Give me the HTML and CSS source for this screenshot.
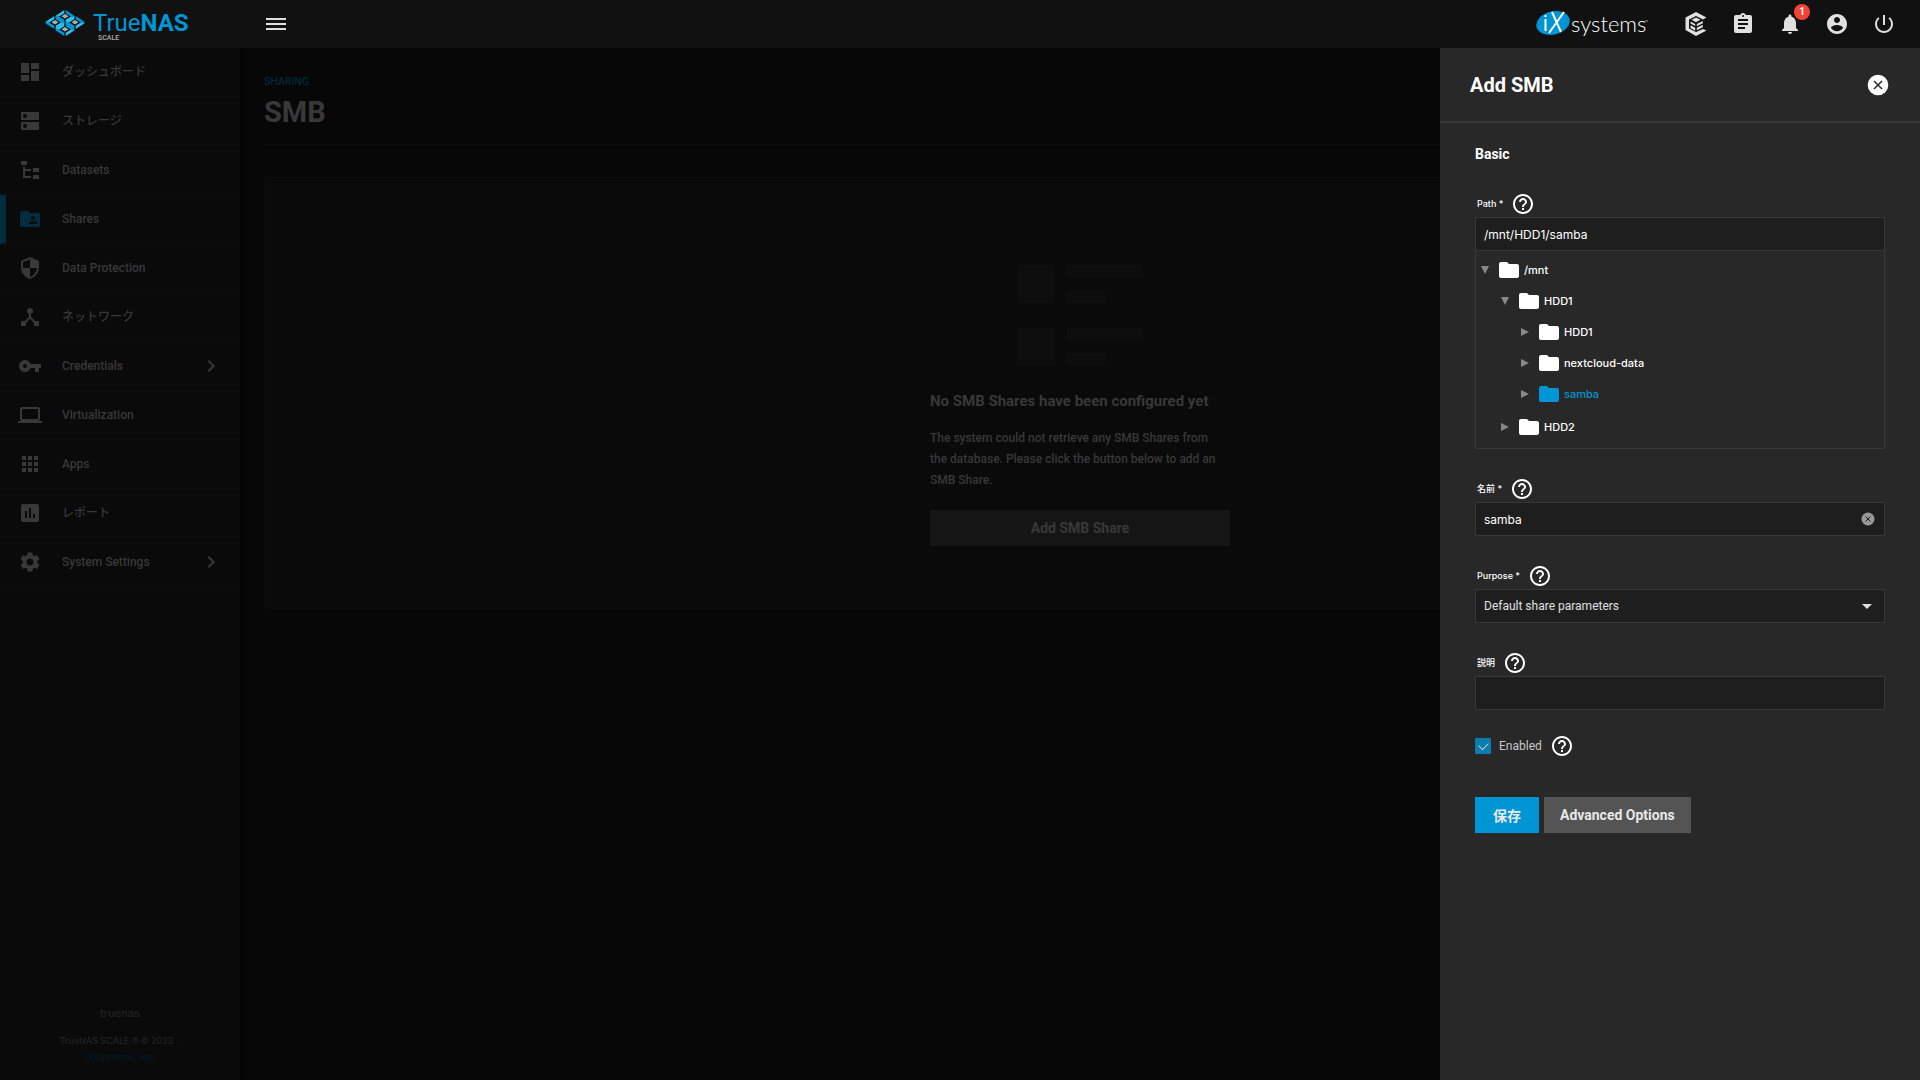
FILE: index.html
```html
<!DOCTYPE html>
<html lang="ja">
<head>
<meta charset="utf-8">
<title>TrueNAS - SMB</title>
<link rel="stylesheet" href="styles.css">
</head>
<body>
<svg class="defs" aria-hidden="true">
  <symbol id="help" viewBox="0 0 24 24"><path d="M11 18h2v-2h-2v2zm1-16C6.480 2 2 6.480 2 12s4.480 10 10 10 10-4.480 10-10S17.520 2 12 2zm0 18c-4.410 0-8-3.590-8-8s3.590-8 8-8 8 3.590 8 8-3.590 8-8 8zm0-14c-2.210 0-4 1.790-4 4h2c0-1.100.900-2 2-2s2 .900 2 2c0 2-3 1.750-3 5h2c0-2.250 3-2.500 3-5 0-2.210-1.790-4-4-4z"/></symbol>
  <symbol id="folder" viewBox="0 0 24 24"><path d="M10 4H4c-1.100 0-1.990.900-1.990 2L2 18c0 1.100.900 2 2 2h16c1.100 0 2-.900 2-2V8c0-1.100-.900-2-2-2h-8l-2-2z"/></symbol>
  <symbol id="chevron" viewBox="0 0 24 24"><path d="M10 6L8.590 7.410 13.170 12l-4.580 4.590L10 18l6-6z"/></symbol>
  <symbol id="down" viewBox="0 0 8 8"><path d="M0 0h8L4 8z"/></symbol>
  <symbol id="right" viewBox="0 0 8 8"><path d="M0 0l8 4-8 4z"/></symbol>
  <g id="cell">
    <path class="light" d="M-9.700 0L-.700-6v3.200L-5 0l-2.400 1.500-2.300-1.200zM9.700 1.200L.700 7V3.800L5 1l2.400-1.500z"/>
    <path class="blue" d="M9.700 0L.700-6v3.200L5 0l2.400 1.500 2.300-1.200zM-9.700 1.200L-.700 7V3.800L-5 1l-2.400-1.500z"/>
    <path class="grey" d="M0-2l3.500 2.300L0 2.600-3.500.300z"/>
  </g>
</svg>

<header class="topbar">
  <a class="brand" href="#" aria-label="TrueNAS SCALE">
    <svg width="152" height="40" viewBox="0 0 152 40">
      <use href="#cell" x="20" y="12"/>
      <use href="#cell" x="10" y="18"/>
      <use href="#cell" x="30" y="18"/>
      <use href="#cell" x="20" y="25"/>
      <text class="logo-text" x="48" y="27"><tspan>True</tspan><tspan class="logo-bold">NAS</tspan></text>
      <text class="logo-sub" x="53" y="36">SCALE</text>
    </svg>
  </a>
  <button class="icon-btn menu-btn" aria-label="Menu"><svg width="24" height="24" viewBox="0 0 24 24"><path d="M2 6h20v2H2zM2 11h20v2H2zM2 16h20v2H2z"/></svg></button>
  <div class="actions">
    <a class="ix" href="#" aria-label="iXsystems">
      <svg width="116" height="36" viewBox="0 0 116 36">
        <ellipse class="blue" cx="17" cy="17" rx="17" ry="11.500" transform="rotate(-14 17 17)"/>
        <path class="ix-mark" d="M9.500 13v12M9.500 9v2M16 6l9 20M28 6L13 27"/>
        <text class="ix-text" x="35" y="26">systems</text>
        <path class="ix-tm" d="M109 15h3"/>
      </svg>
    </a>
    <button class="icon-btn" aria-label="TrueCommand"><svg width="24" height="24" viewBox="0 0 24 24"><path d="M12 0l10.500 5.500-3.500 2L12 4 5 7.500v9l7 3.500 7-3 3.500 1.500L12 24 1.500 18V5.500z"/><path d="M12 5.500l4.500 2.300-4.500 2.400-4.500-2.400zM6.500 9.500l4.700 2.500v2L6.500 11.500zM6.500 13.300l4.700 2.500v3L6.500 16zM12.800 12l6-3v2.300l-6 3zM12.800 15.800l6-3v2.400l-6 3z"/></svg></button>
    <button class="icon-btn" aria-label="Jobs"><svg width="24" height="24" viewBox="0 0 24 24"><path d="M17 9H7V7h10m0 6H7v-2h10m-3 6H7v-2h7M12 3a1 1 0 0 1 1 1 1 1 0 0 1-1 1 1 1 0 0 1-1-1 1 1 0 0 1 1-1m7 0h-4.180C14.400 1.840 13.300 1 12 1s-2.400.840-2.820 2H5a2 2 0 0 0-2 2v14a2 2 0 0 0 2 2h14a2 2 0 0 0 2-2V5a2 2 0 0 0-2-2z"/></svg></button>
    <button class="icon-btn" aria-label="Alerts"><svg width="24" height="24" viewBox="0 0 24 24"><path d="M12 22c1.100 0 2-.900 2-2h-4c0 1.100.890 2 2 2zm6-6v-5c0-3.070-1.640-5.640-4.500-6.320V4c0-.830-.670-1.500-1.500-1.500s-1.500.670-1.500 1.500v.680C7.630 5.360 6 7.920 6 11v5l-2 2v1h16v-1l-2-2z"/></svg><span class="badge">1</span></button>
    <button class="icon-btn" aria-label="Account"><svg width="24" height="24" viewBox="0 0 24 24"><path d="M12 2C6.480 2 2 6.480 2 12s4.480 10 10 10 10-4.480 10-10S17.520 2 12 2zm0 3c1.660 0 3 1.340 3 3s-1.340 3-3 3-3-1.340-3-3 1.340-3 3-3zm0 14.200c-2.500 0-4.710-1.280-6-3.220.030-1.990 4-3.080 6-3.080 1.990 0 5.970 1.090 6 3.080-1.290 1.940-3.500 3.220-6 3.220z"/></svg></button>
    <button class="icon-btn" aria-label="Power"><svg width="24" height="24" viewBox="0 0 24 24"><path d="M13 3h-2v10h2V3zm4.830 2.170l-1.420 1.420C17.990 7.860 19 9.810 19 12c0 3.870-3.130 7-7 7s-7-3.130-7-7c0-2.190 1.010-4.140 2.580-5.420L6.170 5.170C4.230 6.820 3 9.260 3 12c0 4.970 4.030 9 9 9s9-4.030 9-9c0-2.740-1.230-5.180-3.170-6.830z"/></svg></button>
  </div>
</header>

<div class="shell">
  <aside class="sidebar">
    <nav>
      <a class="nav-item" href="#"><svg width="24" height="24" viewBox="0 0 24 24"><path d="M13 3v6h8V3m-8 18h8V11h-8M3 21h8v-6H3m0-2h8V3H3v10z"/></svg><span>ダッシュボード</span></a>
      <a class="nav-item" href="#"><svg width="24" height="24" viewBox="0 0 24 24"><path fill-rule="evenodd" d="M3 3h18v8H3zM7 5a2 2 0 1 0 0 4 2 2 0 0 0 0-4zM3 13h18v8H3zM7 15a2 2 0 1 0 0 4 2 2 0 0 0 0-4z"/></svg><span>ストレージ</span></a>
      <a class="nav-item" href="#"><svg width="24" height="24" viewBox="0 0 24 24"><path d="M3 3h6v4H3V3m12 7h6v4h-6v-4m0 7h6v4h-6v-4m-2-4H7v5h6v2H5V9h2v2h6v2z"/></svg><span>Datasets</span></a>
      <a class="nav-item active" href="#"><svg width="24" height="24" viewBox="0 0 24 24"><path d="M20 6h-8l-2-2H4c-1.100 0-1.990.900-1.990 2L2 18c0 1.100.900 2 2 2h16c1.100 0 2-.900 2-2V8c0-1.100-.900-2-2-2zm-5 3c1.100 0 2 .900 2 2s-.900 2-2 2-2-.900-2-2 .900-2 2-2zm4 8h-8v-1c0-1.330 2.670-2 4-2s4 .670 4 2v1z"/></svg><span>Shares</span></a>
      <a class="nav-item" href="#"><svg width="24" height="24" viewBox="0 0 24 24"><path d="M12 1L3 5v6c0 5.550 3.840 10.740 9 12 5.160-1.260 9-6.450 9-12V5l-9-4zm0 10.990h7c-.530 4.120-3.280 7.790-7 8.940V12H5V6.300l7-3.110v8.800z"/></svg><span>Data Protection</span></a>
      <a class="nav-item" href="#"><svg width="24" height="24" viewBox="0 0 24 24"><path d="M17 16l-4-4V8.820C14.160 8.400 15 7.300 15 6c0-1.660-1.340-3-3-3S9 4.340 9 6c0 1.300.840 2.400 2 2.820V12l-4 4H3v5h5v-3.050l4-4.200 4 4.200V21h5v-5h-4z"/></svg><span>ネットワーク</span></a>
      <a class="nav-item" href="#"><svg width="24" height="24" viewBox="0 0 24 24"><path d="M12.650 10C11.830 7.670 9.610 6 7 6c-3.310 0-6 2.690-6 6s2.690 6 6 6c2.610 0 4.830-1.670 5.650-4H17v4h4v-4h2v-4H12.650zM7 14c-1.100 0-2-.900-2-2s.900-2 2-2 2 .900 2 2-.900 2-2 2z"/></svg><span>Credentials</span><svg class="more" width="24" height="24"><use href="#chevron"/></svg></a>
      <a class="nav-item" href="#"><svg width="24" height="24" viewBox="0 0 24 24"><path d="M20 18c1.100 0 1.990-.900 1.990-2L22 6c0-1.100-.900-2-2-2H4c-1.100 0-2 .900-2 2v10c0 1.100.900 2 2 2H0v2h24v-2h-4zM4 6h16v10H4V6z"/></svg><span>Virtualization</span></a>
      <a class="nav-item" href="#"><svg width="24" height="24" viewBox="0 0 24 24"><path d="M4 8h4V4H4v4zm6 12h4v-4h-4v4zm-6 0h4v-4H4v4zm0-6h4v-4H4v4zm6 0h4v-4h-4v4zm6-10v4h4V4h-4zm-6 4h4V4h-4v4zm6 6h4v-4h-4v4zm0 6h4v-4h-4v4z"/></svg><span>Apps</span></a>
      <a class="nav-item" href="#"><svg width="24" height="24" viewBox="0 0 24 24"><path d="M19 3H5c-1.100 0-2 .900-2 2v14c0 1.100.900 2 2 2h14c1.100 0 2-.900 2-2V5c0-1.100-.900-2-2-2zM9 17H7v-7h2v7zm4 0h-2V7h2v10zm4 0h-2v-4h2v4z"/></svg><span>レポート</span></a>
      <a class="nav-item" href="#"><svg width="24" height="24" viewBox="0 0 24 24"><path d="M19.140 12.940c.040-.300.060-.610.060-.940 0-.320-.020-.640-.070-.940l2.030-1.580c.180-.140.230-.410.120-.610l-1.920-3.320c-.120-.220-.370-.290-.590-.220l-2.390.960c-.500-.380-1.030-.700-1.620-.940l-.360-2.540c-.040-.240-.240-.410-.480-.410h-3.840c-.240 0-.430.170-.470.410l-.360 2.540c-.590.240-1.130.570-1.620.940l-2.390-.960c-.220-.080-.470 0-.590.220L2.740 8.870c-.120.210-.080.470.120.610l2.030 1.580c-.050.300-.090.630-.090.940s.020.640.070.940l-2.030 1.580c-.180.140-.230.410-.120.610l1.920 3.320c.120.220.370.290.590.220l2.390-.960c.500.380 1.030.700 1.620.940l.360 2.540c.050.240.240.410.480.410h3.840c.240 0 .440-.170.470-.410l.360-2.540c.590-.240 1.130-.560 1.620-.940l2.390.960c.220.080.470 0 .590-.220l1.920-3.320c.120-.220.070-.470-.120-.610l-2.010-1.580zM12 15.600c-1.980 0-3.600-1.620-3.600-3.600s1.620-3.600 3.600-3.600 3.600 1.620 3.600 3.600-1.620 3.600-3.600 3.600z"/></svg><span>System Settings</span><svg class="more" width="24" height="24"><use href="#chevron"/></svg></a>
    </nav>
    <footer class="side-foot">
      <p class="host">truenas</p>
      <p class="copy">TrueNAS SCALE ® © 2023 <a href="#">-<br>iXsystems, Inc</a></p>
    </footer>
  </aside>

  <main class="content">
    <a class="crumb" href="#">SHARING</a>
    <h1>SMB</h1>
    <section class="card">
      <div class="empty">
        <div class="skeleton">
          <i class="block"></i><div class="lines"><i class="long"></i><i class="short"></i></div>
          <i class="block"></i><div class="lines"><i class="long"></i><i class="short"></i></div>
        </div>
        <h2>No SMB Shares have been configured yet</h2>
        <p>The system could not retrieve any SMB Shares from the database. Please click the button below to add an SMB Share.</p>
        <button class="add-btn">Add SMB Share</button>
      </div>
    </section>
  </main>
</div>

<section class="drawer" aria-labelledby="drawer-title">
  <div class="drawer-head">
    <h2 id="drawer-title">Add SMB</h2>
    <button class="close" aria-label="Close"><svg width="24" height="24" viewBox="0 0 24 24"><circle cx="12" cy="12" r="10.300"/><path class="cross" d="M8 8l8 8M16 8l-8 8"/></svg></button>
  </div>
  <form class="form">
    <h3>Basic</h3>
    <div class="field">
      <div class="label-row"><label for="path">Path *</label><svg class="help"><use href="#help"/></svg></div>
      <input class="control" id="path" type="text" value="/mnt/HDD1/samba">
      <ul class="tree">
        <li><div class="node"><svg class="tri"><use href="#down"/></svg><svg class="folder"><use href="#folder"/></svg><span>/mnt</span></div>
          <ul>
            <li><div class="node"><svg class="tri"><use href="#down"/></svg><svg class="folder"><use href="#folder"/></svg><span>HDD1</span></div>
              <ul class="leafs">
                <li><div class="node"><svg class="tri"><use href="#right"/></svg><svg class="folder"><use href="#folder"/></svg><span>HDD1</span></div></li>
                <li><div class="node"><svg class="tri"><use href="#right"/></svg><svg class="folder"><use href="#folder"/></svg><span>nextcloud-data</span></div></li>
                <li><div class="node selected"><svg class="tri"><use href="#right"/></svg><svg class="folder"><use href="#folder"/></svg><span>samba</span></div></li>
              </ul>
            </li>
            <li><div class="node"><svg class="tri"><use href="#right"/></svg><svg class="folder"><use href="#folder"/></svg><span>HDD2</span></div></li>
          </ul>
        </li>
      </ul>
    </div>
    <div class="field">
      <div class="label-row"><label for="name">名前 *</label><svg class="help"><use href="#help"/></svg></div>
      <div class="control-wrap">
        <input class="control" id="name" type="text" value="samba">
        <button class="clear" type="button" aria-label="Clear"><svg width="14" height="14" viewBox="0 0 14 14"><circle cx="7" cy="7" r="6.500"/><path d="M4.500 4.500l5 5M9.500 4.500l-5 5"/></svg></button>
      </div>
    </div>
    <div class="field">
      <div class="label-row"><label for="purpose">Purpose *</label><svg class="help"><use href="#help"/></svg></div>
      <div class="control-wrap">
        <select class="control" id="purpose"><option>Default share parameters</option></select>
        <svg class="caret" width="10" height="5" viewBox="0 0 10 5"><path d="M0 0h10L5 5z"/></svg>
      </div>
    </div>
    <div class="field">
      <div class="label-row"><label for="desc">説明</label><svg class="help"><use href="#help"/></svg></div>
      <input class="control" id="desc" type="text">
    </div>
    <div class="check-row">
      <input id="enabled" type="checkbox" checked>
      <label for="enabled">Enabled</label>
      <svg class="help"><use href="#help"/></svg>
    </div>
    <div class="buttons">
      <button class="btn primary" type="button">保存</button>
      <button class="btn" type="button">Advanced Options</button>
    </div>
  </form>
</section>
</body>
</html>
```
FILE: styles.css
```css
* { box-sizing: border-box; }

body {
  margin: 0;
  min-height: 100vh;
  display: flex;
  flex-direction: column;
  background: #070707;
  color: #383838;
  font-family: Roboto, "Noto Sans CJK JP", sans-serif;
  font-size: 12px;
}

h1, h2, h3, p, ul { margin: 0; padding: 0; }
ul { list-style: none; }
a { color: inherit; text-decoration: none; }
svg { display: block; flex: none; fill: currentColor; }
button { padding: 0; border: 0; background: none; color: inherit; font: inherit; }
.defs { position: absolute; width: 0; height: 0; }

.blue { fill: #0095d5; }
.light { fill: #31beec; }
.grey { fill: #aeadae; }

.topbar {
  position: relative;
  z-index: 1;
  display: flex;
  align-items: center;
  height: 48px;
  padding-right: 16px;
  background: #111;
  color: #e0e0e0;
}
.brand { width: 256px; padding-left: 45px; }
.logo-text { font-size: 24px; fill: #0095d5; }
.logo-bold { font-weight: 700; }
.logo-sub { font-size: 7px; font-weight: 500; fill: #aeadae; }
.icon-btn {
  position: relative;
  display: flex;
  align-items: center;
  justify-content: center;
  width: 40px;
  height: 40px;
}
.actions { display: flex; align-items: center; gap: 7px; margin-left: auto; }
.ix { margin-right: 17px; }
.ix-mark { fill: none; stroke: #fff; stroke-width: 2; }
.ix-text { font-family: Lato, sans-serif; font-weight: 300; font-size: 22px; fill: #fff; }
.ix-tm { stroke: #999; }
.badge {
  position: absolute;
  top: 0;
  right: 0;
  width: 16px;
  height: 16px;
  border-radius: 50%;
  background: #f44336;
  color: #fff;
  font-size: 10px;
  font-weight: 700;
  line-height: 16px;
  text-align: center;
}

.shell { display: flex; flex: 1; }
.sidebar {
  display: flex;
  flex-direction: column;
  justify-content: space-between;
  width: 240px;
  background: #0a0a0a;
  box-shadow: 0 0 8px #030303;
}
.nav-item {
  display: flex;
  align-items: center;
  height: 49px;
  padding: 0 17px 0 18px;
  border-bottom: 1px solid #0e0e0e;
}
.nav-item span { margin-left: 20px; font-weight: 500; line-height: 16px; }
.nav-item .more { margin-left: auto; }
.nav-item.active { padding-left: 12px; border-left: 6px solid #002c3f; }
.nav-item.active svg { color: #002c3f; }
.side-foot { padding-bottom: 14px; color: #222; text-align: center; }
.host { font: 500 11px/16px Inter, sans-serif; margin-bottom: 11px; }
.copy { font: 500 9px/17px Inter, sans-serif; }
.copy a { color: #001c29; font-size: 10px; }

.content { flex: 1; padding: 26px 24px; }
.crumb { display: block; color: #002a3b; font: 500 10px/14px Inter, sans-serif; }
h1 {
  padding: 3px 0 11px;
  border-bottom: 1px solid #0e0e0e;
  font-size: 29px;
  line-height: 42px;
}
.card {
  display: flex;
  justify-content: center;
  margin-top: 32px;
  padding: 87px 16px 62px;
  border: 1px solid #0d0d0d;
  border-radius: 4px;
  background: #0a0a0a;
}
.empty { width: 300px; }
.skeleton {
  display: grid;
  grid-template-columns: 38px 76px;
  gap: 25px 12px;
  justify-content: center;
}
.skeleton i { display: block; background: #0e0e0e; }
.block { height: 38px; }
.lines { display: flex; flex-direction: column; justify-content: space-between; }
.long, .short { height: 13px; }
.short { width: 38px; }
.empty h2 { margin-top: 24px; font-size: 15px; line-height: 22px; white-space: nowrap; }
.empty p { margin: 16px 0 19px; padding-right: 8px; font-weight: 500; line-height: 21px; }
.add-btn {
  width: 100%;
  height: 36px;
  background: #151515;
  font-size: 14px;
  font-weight: 700;
}

.drawer {
  position: fixed;
  top: 48px;
  right: 0;
  bottom: 0;
  width: 480px;
  background: #282828;
  color: #fff;
}
.drawer-head {
  display: flex;
  align-items: center;
  justify-content: space-between;
  height: 75px;
  padding: 0 30px;
  border-bottom: 2px solid #383838;
}
.drawer-head h2 { font-size: 20px; }
.cross { fill: none; stroke: #282828; stroke-width: 1.500; }
.form { padding: 20px 35px; }
h3 { margin-bottom: 27px; font-size: 14px; line-height: 22px; }
.field { margin-bottom: 28px; }
.label-row { display: flex; gap: 8px; height: 25px; padding-left: 2px; }
.label-row label { font: 500 9px/24px Inter, "Noto Sans CJK JP", sans-serif; }
.help { width: 24px; height: 24px; }
.control {
  display: block;
  width: 100%;
  height: 34px;
  padding: 0 8px;
  border: 1px solid #383838;
  border-radius: 1px;
  outline: 0;
  background: #1e1e1e;
  color: #fff;
  font: 12px Inter, sans-serif;
  appearance: none;
}
select.control { font-family: Roboto, sans-serif; color: #e0e0e0; }
.control-wrap { display: grid; align-items: center; }
.control-wrap > * { grid-area: 1 / 1; }
.clear, .caret { justify-self: end; margin-right: 10px; }
.clear { color: #999; }
.clear path { fill: none; stroke: #1e1e1e; stroke-width: 1; }
.caret { margin-right: 13px; color: #e0e0e0; }
.tree {
  padding: 3px 5px 6px;
  border: 1px solid #383838;
  border-top: 0;
  font: 500 11px Inter, sans-serif;
}
.tree ul { padding-left: 20px; }
.tree .leafs { padding-bottom: 2px; }
.node { display: flex; align-items: center; height: 31px; }
.tri { width: 8px; height: 8px; margin-right: 8px; color: #888; }
.folder { width: 24px; height: 24px; margin-right: 3px; }
.selected .folder, .selected span { color: #0095d5; }
.check-row { display: flex; align-items: center; margin-top: -4px; color: #c8c8c8; }
.check-row input {
  display: grid;
  place-items: center;
  width: 16px;
  height: 16px;
  margin: 0 8px 0 0;
  border-radius: 1px;
  background: #0a7cae;
  appearance: none;
}
.check-row input:checked::before {
  content: "";
  width: 8px;
  height: 5px;
  margin-bottom: 3px;
  border: solid #c8c8c8;
  border-width: 0 0 1px 1px;
  transform: rotate(-45deg);
}
.check-row .help { margin-left: 8px; color: #fff; }
.buttons { display: flex; gap: 5px; margin-top: 39px; }
.btn {
  height: 36px;
  padding: 0 16px;
  background: #545454;
  color: #e8e8e8;
  font-size: 14px;
  font-weight: 700;
}
.primary { padding: 0 18px; background: #0095d5; }
```
